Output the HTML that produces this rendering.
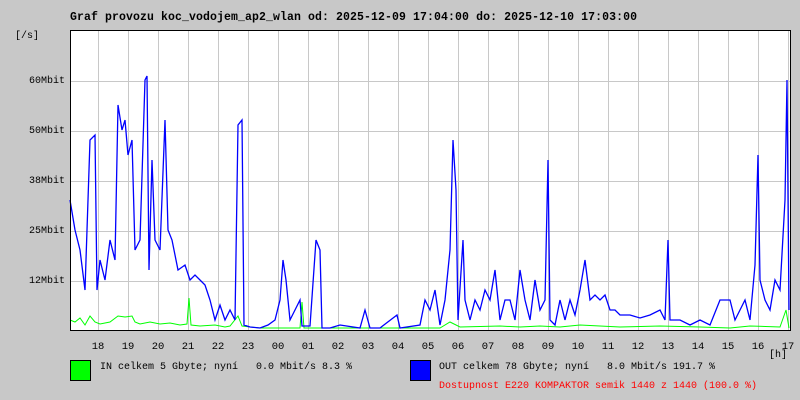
<!DOCTYPE html>
<html><head><meta charset="utf-8"><style>
body{margin:0;background:#c8c8c8;width:800px;height:400px;overflow:hidden;font-family:"Liberation Mono","DejaVu Sans Mono",monospace;font-size:10px;}
.t{position:absolute;white-space:pre;}
.h{position:absolute;top:341px;width:30px;margin-left:-15px;text-align:center;font-size:10.5px}
</style></head><body>
<div style="position:relative;width:800px;height:400px">
<div class="t" style="left:70px;top:11px;font-weight:bold;font-size:11.5px;letter-spacing:0.1px">Graf provozu koc_vodojem_ap2_wlan od: 2025-12-09 17:04:00 do: 2025-12-10 17:03:00</div>
<div class="t" style="left:15px;top:31px">[/s]</div>
<div class="t" style="left:29px;top:76px">60Mbit</div>
<div class="t" style="left:29px;top:126px">50Mbit</div>
<div class="t" style="left:29px;top:176px">38Mbit</div>
<div class="t" style="left:29px;top:226px">25Mbit</div>
<div class="t" style="left:29px;top:276px">12Mbit</div>
<svg style="position:absolute;left:0;top:0" width="800" height="400">
<rect x="70.5" y="30.5" width="720" height="300" fill="#fff"/>
<g stroke="#c8c8c8" stroke-width="1">
<path d="M98.5 30V330M128.5 30V330M158.5 30V330M188.5 30V330M218.5 30V330M248.5 30V330M278.5 30V330M308.5 30V330M338.5 30V330M368.5 30V330M398.5 30V330M428.5 30V330M458.5 30V330M488.5 30V330M518.5 30V330M548.5 30V330M578.5 30V330M608.5 30V330M638.5 30V330M668.5 30V330M698.5 30V330M728.5 30V330M758.5 30V330M788.5 30V330"/>
<path d="M70 81.5H790M70 131.5H790M70 181.5H790M70 231.5H790M70 281.5H790"/>
</g>
<polyline fill="none" stroke="#0f0" stroke-width="1" points="70,320 75,322 80,318 85,325 90,316 95,322 100,324 110,322 118,316 125,317 132,316 135,322 140,324 150,322 160,324 170,323 180,325 187,324 189,298 191,325 200,326 215,325 225,327 230,326 238,316 242,326 260,328 300,328 302,302 304,328 360,328 440,328 450,322 460,327 500,326 520,327 540,326 560,327 580,325 600,326 620,327 660,326 700,327 730,328 750,326 780,327 786,310 789,328"/>
<polyline fill="none" stroke="#00f" stroke-width="1.3" points="70,200 75,230 80,250 85,290 90,140 95,135 97,290 100,260 105,280 110,240 115,260 118,105 122,130 125,120 128,155 132,140 135,250 140,240 145,80 147,76 149,270 152,160 155,240 160,250 165,120 168,230 172,240 178,270 185,265 190,280 195,275 200,280 205,285 210,300 215,320 220,305 225,320 230,310 235,320 238,125 242,120 244,325 250,327 260,328 268,325 275,320 280,300 283,260 286,280 290,320 300,300 302,326 310,326 316,240 320,250 322,328 330,328 340,325 360,328 365,310 370,328 380,328 397,315 400,328 420,325 425,300 430,310 435,290 440,325 445,300 450,250 453,140 456,190 458,320 463,240 465,300 470,320 475,300 480,310 485,290 490,300 495,270 500,320 505,300 510,300 515,320 520,270 525,300 530,320 535,280 540,310 545,300 548,160 550,320 555,325 560,300 565,320 570,300 575,315 580,290 585,260 590,300 595,295 600,300 605,295 610,310 615,310 620,315 630,315 640,318 650,315 660,310 665,320 668,240 670,320 680,320 690,325 700,320 710,325 720,300 730,300 735,320 740,310 745,300 750,320 755,265 758,155 760,280 765,300 770,310 775,280 780,290 785,200 787,80 789,310"/>
<rect x="70.5" y="30.5" width="720" height="300" fill="none" stroke="#000" stroke-width="1"/>
<rect x="70.5" y="360.5" width="20" height="20" fill="#0f0" stroke="#000"/>
<rect x="410.5" y="360.5" width="20" height="20" fill="#00f" stroke="#000"/>
</svg>
<div class="h" style="left:98px">18</div><div class="h" style="left:128px">19</div><div class="h" style="left:158px">20</div><div class="h" style="left:188px">21</div><div class="h" style="left:218px">22</div><div class="h" style="left:248px">23</div><div class="h" style="left:278px">00</div><div class="h" style="left:308px">01</div><div class="h" style="left:338px">02</div><div class="h" style="left:368px">03</div><div class="h" style="left:398px">04</div><div class="h" style="left:428px">05</div><div class="h" style="left:458px">06</div><div class="h" style="left:488px">07</div><div class="h" style="left:518px">08</div><div class="h" style="left:548px">09</div><div class="h" style="left:578px">10</div><div class="h" style="left:608px">11</div><div class="h" style="left:638px">12</div><div class="h" style="left:668px">13</div><div class="h" style="left:698px">14</div><div class="h" style="left:728px">15</div><div class="h" style="left:758px">16</div><div class="h" style="left:788px">17</div>
<div class="t" style="left:769px;top:350px">[h]</div>
<div class="t" style="left:100px;top:362px">IN celkem 5 Gbyte; nyní   0.0 Mbit/s 8.3 %</div>
<div class="t" style="left:439px;top:362px">OUT celkem 78 Gbyte; nyní   8.0 Mbit/s 191.7 %</div>
<div class="t" style="left:439px;top:381px;color:#f00">Dostupnost E220 KOMPAKTOR semik 1440 z 1440 (100.0 %)</div>
</div>
</body></html>
